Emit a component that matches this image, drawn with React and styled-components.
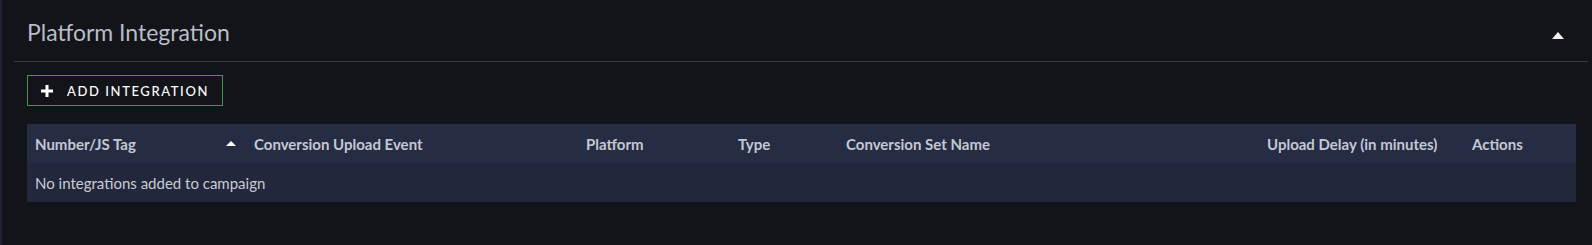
import React from "react";
import styled, { createGlobalStyle } from "styled-components";

const Global = createGlobalStyle`
  html, body { margin: 0; padding: 0; background: #131419; }
  body { font-family: Lato, "Open Sans", sans-serif; }
`;

const Page = styled.div`
  min-height: 245px;
  box-sizing: border-box;
  border-left: 2px solid #1d2436;
  padding: 0 4px 0 12px;
`;

const Section = styled.section`
  display: flex;
  flex-direction: column;
`;

const Header = styled.div`
  height: 62px;
  box-sizing: border-box;
  display: flex;
  align-items: center;
  justify-content: space-between;
  padding: 2px 24px 0 13px;
  border-bottom: 1px solid #3a3b42;
`;

const Title = styled.h2`
  margin: 0;
  font-size: 23px;
  font-weight: 400;
  color: #b8bdc7;
`;

const Caret = styled.span`
  width: 0;
  height: 0;
  border-left: ${(p) => p.$size}px solid transparent;
  border-right: ${(p) => p.$size}px solid transparent;
  border-bottom: ${(p) => p.$h}px solid ${(p) => p.$color};
  display: inline-block;
  margin-top: ${(p) => p.$offset || 0}px;
`;

const Body = styled.div`
  padding: 13px 12px 0 13px;
  display: flex;
  flex-direction: column;
  gap: 18px;
`;

const AddButton = styled.button`
  align-self: flex-start;
  display: flex;
  align-items: center;
  gap: 14px;
  height: 31px;
  width: 196px;
  box-sizing: border-box;
  padding: 0 0 0 13px;
  background: transparent;
  border: 1px solid #3c9a47;
  color: #ffffff;
  font-family: Lato, sans-serif;
  font-size: 13px;
  font-weight: 500;
  letter-spacing: 1.6px;
  text-transform: uppercase;
  cursor: pointer;
`;

const Table = styled.div`
  display: grid;
  grid-template-columns: 219px 332px 152px 108px 421px 205px 1fr;
`;

const HeadCell = styled.div`
  height: 39px;
  background: #272c45;
  display: flex;
  align-items: center;
  justify-content: space-between;
  padding: 0 10px 0 8px;
  font-size: 15px;
  font-weight: 700;
  color: #c4c8d2;
  white-space: nowrap;
`;

const EmptyRow = styled.div`
  grid-column: 1 / -1;
  height: 39px;
  background: #22273c;
  display: flex;
  align-items: center;
  padding: 0 8px;
  font-size: 15px;
  color: #c9ccd4;
`;

const PlusIcon = () => (
  <svg width="12" height="12" viewBox="0 0 12 12">
    <rect x="4.5" y="0" width="3" height="12" fill="#fff" />
    <rect x="0" y="4.5" width="12" height="3" fill="#fff" />
  </svg>
);

const columns = [
  "Number/JS Tag",
  "Conversion Upload Event",
  "Platform",
  "Type",
  "Conversion Set Name",
  "Upload Delay (in minutes)",
  "Actions",
];

export default function App() {
  return (
    <>
      <Global />
      <Page>
        <Section>
          <Header>
            <Title>Platform Integration</Title>
            <Caret $size={6} $h={7} $color="#f2f2f2" $offset={8} />
          </Header>
          <Body>
            <AddButton>
              <PlusIcon />
              Add Integration
            </AddButton>
            <Table>
              {columns.map((c, i) => (
                <HeadCell key={c}>
                  <span>{c}</span>
                  {i === 0 && <Caret $size={5} $h={5} $color="#ffffff" />}
                </HeadCell>
              ))}
              <EmptyRow>No integrations added to campaign</EmptyRow>
            </Table>
          </Body>
        </Section>
      </Page>
    </>
  );
}
